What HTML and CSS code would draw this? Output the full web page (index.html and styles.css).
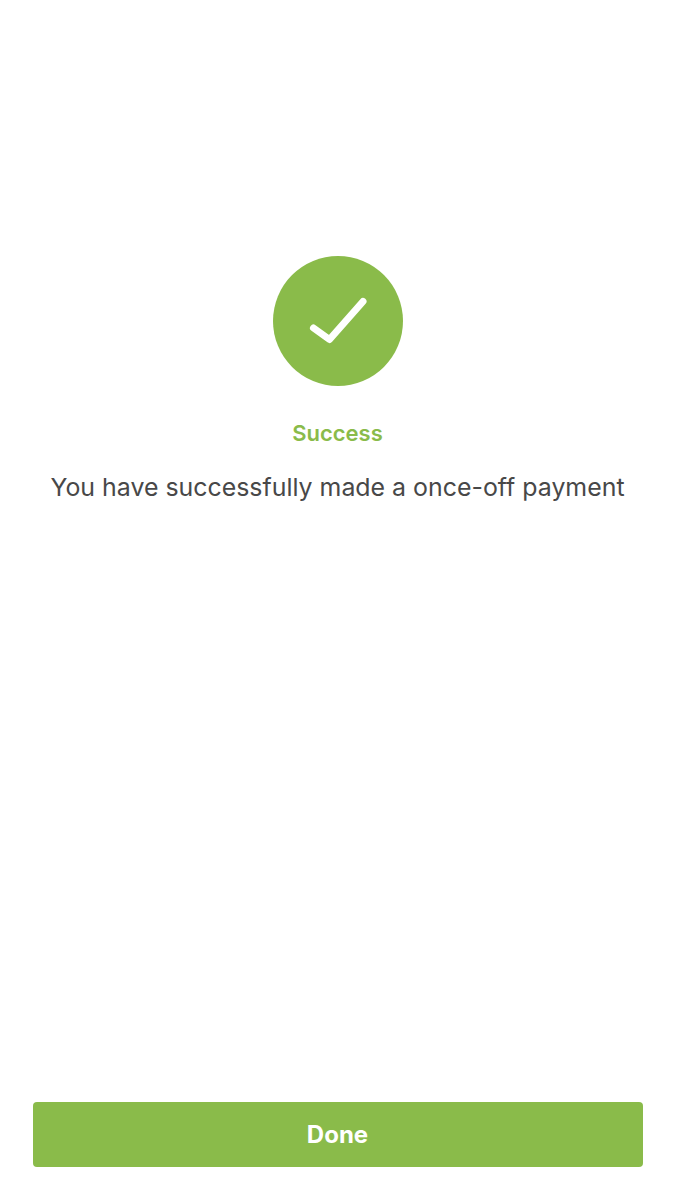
FILE: index.html
```html
<!DOCTYPE html>
<html lang="en">
<head>
    <meta charset="UTF-8">
    <meta name="viewport" content="width=device-width, initial-scale=1.0">
    <title>Payment success</title>
    <link rel="stylesheet" href="styles.css">
</head>
<body>
    <div class="screen">
        <div class="result">
            <svg class="result-icon" width="130" height="130" viewBox="0 0 130 130">
                <circle cx="65" cy="65" r="65" fill="#8abb4a"/>
                <path d="M40.5 72 L56.5 83.5 L90 45.5" fill="none" stroke="#fff" stroke-width="7" stroke-linecap="round" stroke-linejoin="round"/>
            </svg>
            <h1 class="result-title">Success</h1>
            <p class="result-text">You have successfully made a once-off payment</p>
        </div>
        <button class="done-btn">Done</button>
    </div>
</body>
</html>
```

FILE: styles.css
```css
* {
    margin: 0;
    padding: 0;
    box-sizing: border-box;
}

body {
    font-family: 'Inter', 'Noto Sans', sans-serif;
    background: #fff;
}

.screen {
    height: 1200px;
    padding: 256px 32.5px 33px;
    display: flex;
    flex-direction: column;
    justify-content: space-between;
}

.result {
    display: flex;
    flex-direction: column;
    align-items: center;
}

.result-icon {
    display: block;
}

.result-title {
    margin-top: 33px;
    font-size: 22px;
    line-height: 28px;
    font-weight: 600;
    color: #8abb4a;
}

.result-text {
    margin-top: 25px;
    font-size: 24.9px;
    line-height: 30px;
    font-weight: 400;
    color: #484848;
    white-space: nowrap;
}

.done-btn {
    width: 100%;
    height: 65px;
    background: #8abb4a;
    color: #fff;
    border: none;
    border-radius: 4px;
    font-family: inherit;
    font-size: 24px;
    font-weight: 700;
}
```
